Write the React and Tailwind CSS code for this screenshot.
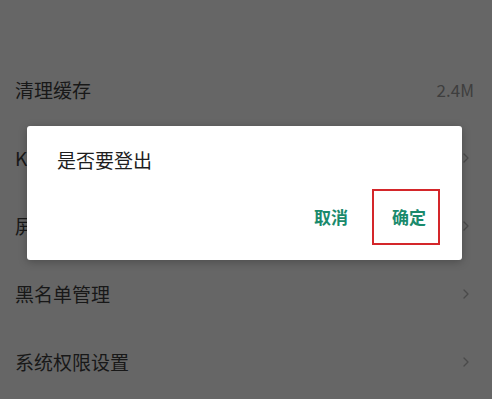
import React from "react";

function Chevron() {
  return (
    <svg width="8" height="12" viewBox="0 0 8 12" className="shrink-0">
      <path d="M2 2 L6 6 L2 10" fill="none" stroke="#4a4a4a" strokeWidth="1.3" strokeLinecap="round" strokeLinejoin="round" />
    </svg>
  );
}

function Row({ label, right, chevron }) {
  return (
    <div className="h-[68px] flex items-center justify-between pl-[15px] pr-[22px]">
      <span className="text-[19px] text-[#181818]">{label}</span>
      {right && <span className="text-[17px] text-[#3e3e3e] -mr-[4px]">{right}</span>}
      {chevron && <Chevron />}
    </div>
  );
}

export default function App() {
  return (
    <div
      className="relative w-[492px] h-[399px] overflow-hidden bg-[#666666]"
      style={{ fontFamily: '"Noto Sans CJK SC", "Noto Sans", sans-serif' }}
    >
      <div className="flex flex-col -mt-[47px]">
        <Row label="夜间模式" />
        <div className="h-[35px]" />
        <Row label="清理缓存" right="2.4M" />
        <Row label="K歌设置" chevron />
        <Row label="屏蔽设置" chevron />
        <Row label="黑名单管理" chevron />
        <Row label="系统权限设置" chevron />
      </div>

      <div className="absolute left-[27px] top-[126px] w-[435px] h-[134px] bg-white rounded-[3px] shadow-[0_2px_8px_rgba(0,0,0,0.25)] flex flex-col pt-[21px]">
        <div className="pl-[30px] text-[19px] leading-[26px] text-[#1e1e1e]">是否要登出</div>
        <div className="mt-[16px] flex justify-end items-center pr-[22px]">
          <span className="text-[17px] font-bold text-[#1a8a6c] mr-[24px]">取消</span>
          <div className="w-[68px] h-[56px] border-2 border-[#d4262a] flex items-center pl-[18px]">
            <span className="text-[17px] font-bold text-[#1a8a6c]">确定</span>
          </div>
        </div>
      </div>
    </div>
  );
}
